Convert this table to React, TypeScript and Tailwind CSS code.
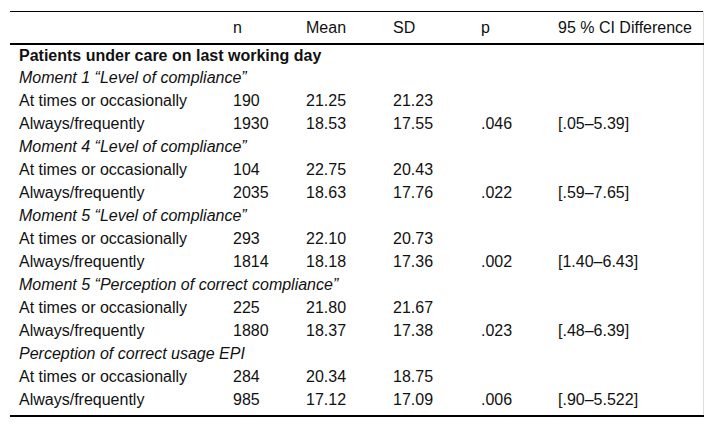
const rows: { kind: "title" | "sub" | "data"; label: string; v?: string[] }[] = [
  { kind: "title", label: "Patients under care on last working day" },
  { kind: "sub", label: "Moment 1 \u201cLevel of compliance\u201d" },
  { kind: "data", label: "At times or occasionally", v: ["190", "21.25", "21.23", "", ""] },
  { kind: "data", label: "Always/frequently", v: ["1930", "18.53", "17.55", ".046", "[.05\u20135.39]"] },
  { kind: "sub", label: "Moment 4 \u201cLevel of compliance\u201d" },
  { kind: "data", label: "At times or occasionally", v: ["104", "22.75", "20.43", "", ""] },
  { kind: "data", label: "Always/frequently", v: ["2035", "18.63", "17.76", ".022", "[.59\u20137.65]"] },
  { kind: "sub", label: "Moment 5 \u201cLevel of compliance\u201d" },
  { kind: "data", label: "At times or occasionally", v: ["293", "22.10", "20.73", "", ""] },
  { kind: "data", label: "Always/frequently", v: ["1814", "18.18", "17.36", ".002", "[1.40\u20136.43]"] },
  { kind: "sub", label: "Moment 5 \u201cPerception of correct compliance\u201d" },
  { kind: "data", label: "At times or occasionally", v: ["225", "21.80", "21.67", "", ""] },
  { kind: "data", label: "Always/frequently", v: ["1880", "18.37", "17.38", ".023", "[.48\u20136.39]"] },
  { kind: "sub", label: "Perception of correct usage EPI" },
  { kind: "data", label: "At times or occasionally", v: ["284", "20.34", "18.75", "", ""] },
  { kind: "data", label: "Always/frequently", v: ["985", "17.12", "17.09", ".006", "[.90\u20135.522]"] },
];

const headers = ["n", "Mean", "SD", "p", "95 % CI Difference"];

export default function App() {
  return (
    <div className="w-[714px] h-[430px] bg-white pt-[11px] pl-[10px] font-['Liberation_Sans',Arial,sans-serif] text-[16px] leading-[20px] text-[#111]">
      <table className="w-[693px] table-fixed border-collapse border-t border-t-black border-r border-r-[#dddddd]">
        <colgroup>
          <col className="w-[214px]" />
          <col className="w-[73px]" />
          <col className="w-[87px]" />
          <col className="w-[88px]" />
          <col className="w-[77px]" />
          <col className="w-[154px]" />
        </colgroup>
        <thead>
          <tr className="h-[32px] border-b-2 border-b-black">
            <th />
            {headers.map((h) => (
              <th key={h} className="pl-[9px] pt-[2px] text-left font-normal align-middle whitespace-nowrap">
                {h}
              </th>
            ))}
          </tr>
        </thead>
        <tbody className="border-b-2 border-b-black">
          {rows.map((r, i) => {
            const last = i === rows.length - 1;
            if (r.kind !== "data") {
              return (
                <tr key={i} className="h-[23px]">
                  <td
                    colSpan={6}
                    className={`pl-[9px] whitespace-nowrap ${r.kind === "title" ? "font-bold pt-[1px]" : "italic"}`}
                  >
                    {r.label}
                  </td>
                </tr>
              );
            }
            return (
              <tr key={i} className={last ? "h-[27px] align-top" : "h-[23px]"}>
                <td className={`pl-[9px] whitespace-nowrap ${last ? "pt-[1px]" : ""}`}>{r.label}</td>
                {r.v!.map((c, j) => (
                  <td key={j} className={`pl-[9px] whitespace-nowrap ${last ? "pt-[1px]" : ""}`}>
                    {c}
                  </td>
                ))}
              </tr>
            );
          })}
        </tbody>
      </table>
    </div>
  );
}
